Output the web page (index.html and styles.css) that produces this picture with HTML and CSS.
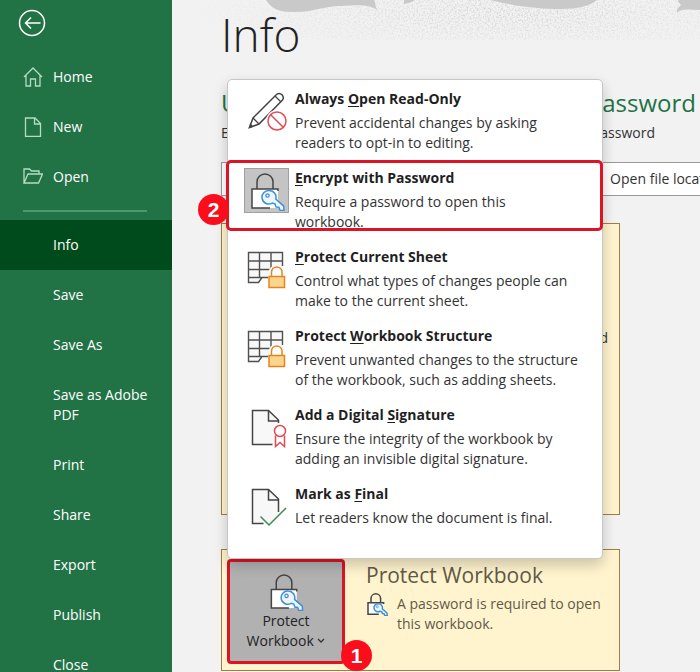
FILE: index.html
```
<!DOCTYPE html>
<html lang="en">
<head>
<meta charset="utf-8">
<title>Info</title>
<link rel="stylesheet" href="styles.css">
</head>

<body>

<!-- shared icons -->
<svg class="defs" width="0" height="0" aria-hidden="true">
	<symbol id="lock-key" viewBox="0 0 36 40">
		<path d="M3 18h26v19H3z" fill="#fff"/>
		<path d="M8 18V11a8 8 0 0 1 16 0v7M29 20v-2H3v19h18" fill="none" stroke="#444" stroke-width="1.500" vector-effect="non-scaling-stroke"/>
		<path d="M20.500 19.500a6.800 6.800 0 1 0 2.800 12.600l2.700.8 1 3 3 .5 1 2.900 4 .2-.3-4.400-7.900-7a6.800 6.800 0 0 0-6.300-8.600z" fill="#eef6fd" stroke="#3f8fd2" stroke-width="1.500" vector-effect="non-scaling-stroke"/>
		<circle cx="18.500" cy="24.500" r="1.700" fill="#fff" stroke="#3f8fd2" stroke-width="1.300"/>
	</symbol>
	<symbol id="sheet-lock" viewBox="0 0 40 38">
		<path d="M1.500 1.500h34v25h-21l-3 5h-10z" fill="#f8f8f8"/>
		<path d="M35.500 15V1.500h-34v30h10l3.500-5h7M1.500 10h34M1.500 18.500h24M1.500 26.500h14M12.500 1.500v25M24 1.500v20" fill="none" stroke="#505050" stroke-width="1.400"/>
		<path d="M22 25v-4c0-9 15-9 15 0v4h2v13H21V25z" fill="#fff"/>
		<path d="M24.500 25.500v-4c0-7.500 10.500-7.500 10.500 0v4" fill="none" stroke="#e8821e" stroke-width="1.500"/>
		<path d="M22 25.500h15.500V36.500H22z" fill="#fad58c" stroke="#e8821e" stroke-width="1.500"/>
	</symbol>
</svg>

<div class="backstage">

<nav class="sidebar">
	<button type="button" class="back" aria-label="Back">
		<svg width="28" height="28" viewBox="0 0 28 28"><circle cx="14" cy="14" r="12.500"/><path d="M22.500 14H7.500M13 8.500L7.500 14l5.500 5.500"/></svg>
	</button>
	<ul class="top">
		<li><a href="#"><svg width="20" height="20" viewBox="0 0 20 20"><path d="M1 10l9-9 9 9M3 8.500V19h4.500v-7h5v7H17V8.500"/></svg>Home</a></li>
		<li><a href="#"><svg width="20" height="20" viewBox="0 0 20 20"><path d="M2.500 1h9.500l5.500 5.500V19.500h-15zM11.500 1v6h6"/></svg>New</a></li>
		<li><a href="#"><svg width="20" height="20" viewBox="0 0 20 20"><path d="M1 16V2h5.500l2 2H16v3M1 16L5 7h14.500L15.500 16z"/></svg>Open</a></li>
	</ul>
	<ul>
		<li class="active"><a href="#">Info</a></li>
		<li><a href="#">Save</a></li>
		<li><a href="#">Save As</a></li>
		<li><a href="#">Save as Adobe PDF</a></li>
		<li><a href="#">Print</a></li>
		<li><a href="#">Share</a></li>
		<li><a href="#">Export</a></li>
		<li><a href="#">Publish</a></li>
		<li><a href="#">Close</a></li>
	</ul>
</nav>

<main>
	<svg class="banner" width="528" height="40" viewBox="0 0 528 40" aria-hidden="true">
		<defs>
			<filter id="grain" x="0" y="0" width="100%" height="100%">
				<feTurbulence type="fractalNoise" baseFrequency="0.6" numOctaves="2" seed="4"/>
				<feColorMatrix values="0 0 0 0 .66  0 0 0 0 .66  0 0 0 0 .66  3 0 0 0 -1.300"/>
			</filter>
			<radialGradient id="fade"><stop offset="0" stop-color="#fff"/><stop offset=".4" stop-color="#999"/><stop offset="1" stop-color="#000"/></radialGradient>
			<mask id="spread"><ellipse cx="335" cy="12" rx="320" ry="50" fill="url(#fade)"/></mask>
		</defs>
		<g mask="url(#spread)"><rect width="528" height="40" filter="url(#grain)"/></g>
		<path fill="#c9c9c9" d="M94 0c5 8 12 12 25 12 20 1 32-6 50-6 18-1 26-2 37 4-4-4-2-7-4-10zM232 0v4c5-1 8-2 11-4zM318 0c24 6 50 9 72 9 15 0 28-3 35-9zM506 0c0 3 2 3 3 5-2 2-5 4-4 8 4-5 14-3 23-3V0z"/>
	</svg>

	<h1>Info</h1>

	<div class="file-name"><span>U</span><span>Password</span></div>
	<div class="file-path"><span>E</span><span>Password</span></div>

	<div class="actions">
		<button type="button">Upload</button>
		<button type="button">Share</button>
		<button type="button">Copy path</button>
		<button type="button">Open file location</button>
	</div>

	<section class="card protected-view">
		<p>d</p>
	</section>

	<section class="card">
		<div class="dropdown">
			<button type="button" class="protect" aria-expanded="true">
				<svg width="36" height="40"><use href="#lock-key"/></svg>
				<span>Protect Workbook <svg class="chevron" width="8" height="6" viewBox="0 0 8 6"><path d="M1 1l3 3 3-3"/></svg></span>
			</button>
			<span class="badge">1</span>

			<ul class="menu">
				<li><a href="#">
					<span class="icon"><svg width="40" height="40" viewBox="0 0 40 40">
						<path d="M2.500 35.500L6 26 29.500 2.500c4-3 8.500 2 6 5.500L12 32z" fill="#fff" stroke="#444" stroke-width="1.500"/>
						<path d="M6 26l6 6M28 4l6 6M2.500 35.500l1-3 2 2z" fill="none" stroke="#444" stroke-width="1.300"/>
						<circle cx="30" cy="29" r="11" fill="#fff"/>
						<path d="M23.500 22.500l13 13" stroke="#e24a58" stroke-width="1.500"/>
						<circle cx="30" cy="29" r="9" fill="none" stroke="#e24a58" stroke-width="1.500"/>
					</svg></span>
					<span class="text"><b>Always <u>O</u>pen Read-Only</b>Prevent accidental changes by asking readers to opt-in to editing.</span>
				</a></li>
				<li class="selected"><a href="#">
					<span class="icon"><svg width="36" height="40"><use href="#lock-key"/></svg></span>
					<span class="text"><b><u>E</u>ncrypt with Password</b>Require a password to open this workbook.</span>
				</a><span class="badge">2</span></li>
				<li><a href="#">
					<span class="icon"><svg width="40" height="38"><use href="#sheet-lock"/></svg></span>
					<span class="text"><b><u>P</u>rotect Current Sheet</b>Control what types of changes people can make to the current sheet.</span>
				</a></li>
				<li><a href="#">
					<span class="icon"><svg width="40" height="38"><use href="#sheet-lock"/></svg></span>
					<span class="text"><b>Protect <u>W</u>orkbook Structure</b>Prevent unwanted changes to the structure of the workbook, such as adding sheets.</span>
				</a></li>
				<li><a href="#">
					<span class="icon"><svg width="40" height="40" viewBox="0 0 40 40">
						<path d="M5.500 2.500h16L31.500 13v23.500h-26z" fill="#f8f8f8"/>
						<path d="M31.500 15v-3L21.500 2.500h-16v34h20M21.500 2.500V13h10" fill="none" stroke="#444" stroke-width="1.500"/>
						<path d="M28.500 27.500v11l4.500-4 4.500 4v-11" fill="#fff" stroke="#e24a58" stroke-width="1.500"/>
						<circle cx="33" cy="23" r="5.500" fill="#fff" stroke="#e24a58" stroke-width="1.500"/>
					</svg></span>
					<span class="text"><b>Add a Digital <u>S</u>ignature</b>Ensure the integrity of the workbook by adding an invisible digital signature.</span>
				</a></li>
				<li><a href="#">
					<span class="icon"><svg width="40" height="40" viewBox="0 0 40 40">
						<path d="M5.500 2.500h16L31.500 13v23.500h-26z" fill="#f8f8f8"/>
						<path d="M31.500 25V12L21.500 2.500h-16v34h11M21.500 2.500V13h10" fill="none" stroke="#444" stroke-width="1.500"/>
						<path d="M13.500 29.500l8.500 8.500 17-17" fill="none" stroke="#3f8a5c" stroke-width="1.500"/>
					</svg></span>
					<span class="text"><b>Mark as <u>F</u>inal</b>Let readers know the document is final.</span>
				</a></li>
			</ul>
		</div>

		<div class="status">
			<h2>Protect Workbook</h2>
			<p><svg width="22" height="24"><use href="#lock-key"/></svg>A password is required to open this workbook.</p>
		</div>
	</section>
</main>

</div>

</body>
</html>
```

FILE: styles.css
```
*, *::after {
	box-sizing: border-box;
}

body {
	margin: 0;
	background: #f2f2f2;
	color: #333;
	font: 14px/20px "Open Sans", "Noto Sans", sans-serif;
}

ul, h1, h2, p {
	margin: 0;
	padding: 0;
}

li {
	list-style-type: none;
}

a {
	color: inherit;
	text-decoration: none;
}

button {
	font: inherit;
	color: inherit;
	padding: 0;
}

.defs {
	position: absolute;
}

.backstage {
	display: flex;
	height: 100vh;
	overflow: hidden;
}

/* sidebar */

.sidebar {
	flex: none;
	width: 172px;
	background: #217346;
	color: #fff;
}

.sidebar svg {
	display: block;
	fill: none;
	stroke: #fff;
	stroke-width: 1.5;
}

.back {
	display: block;
	margin: 9px 0 15px 18px;
	border: 0;
	background: none;
}

.sidebar a {
	display: flex;
	padding: 15px 16px 15px 53px;
}

.sidebar .top {
	margin-bottom: 8px;
}

.sidebar .top a {
	gap: 10px;
	padding-left: 23px;
}

.sidebar .top svg {
	stroke: #b5dcc4;
	stroke-width: 1.3;
}

.sidebar .top::after {
	content: "";
	display: block;
	height: 2px;
	margin: 8px 25px 0 23px;
	background: #4d9a6d;
}

.sidebar .active {
	background: #004b1c;
}

/* page */

main {
	position: relative;
	flex: 1;
	min-width: 0;
	padding-left: 49px;
	overflow: hidden;
}

.banner {
	position: absolute;
	top: 0;
	left: 0;
}

h1 {
	position: relative;
	height: 86px;
	color: #222;
	font-size: 46px;
	font-weight: 300;
	line-height: 68px;
}

.file-name, .file-path {
	display: flex;
	justify-content: space-between;
}

.file-name {
	max-width: 475px;
	color: #217346;
	font-size: 24px;
	line-height: 34px;
}

.file-path {
	max-width: 434px;
	padding: 3px 0 19px;
}

.actions {
	display: flex;
	gap: 7px;
	white-space: nowrap;
}

.actions button {
	flex: none;
	height: 34px;
	padding: 0 30px;
	border: 1px solid #999;
	background: #fff;
}

.card {
	position: relative;
	display: flex;
	gap: 21px;
	width: 399px;
	margin-bottom: 34px;
	padding: 9px 6px 6px 5px;
	border: 1px solid #9c7f3c;
	background: #fff4ce;
}

.protected-view {
	justify-content: flex-end;
	height: 292px;
	margin-top: 27px;
	padding: 104px 11px 0;
}

.dropdown {
	position: relative;
	flex: none;
}

.protect {
	display: flex;
	flex-direction: column;
	align-items: center;
	width: 118px;
	height: 105px;
	padding: 10px 8px;
	border: 3px solid #dc1424;
	border-radius: 4px;
	background: #b1b1b1;
	color: #222;
	font-weight: 500;
}

.chevron {
	fill: none;
	stroke: #333;
	stroke-width: 1.3;
	vertical-align: 2px;
}

.status {
	padding-top: 1px;
	color: #5f5a48;
}

h2 {
	font-size: 21px;
	font-weight: 400;
	line-height: 30px;
}

.status p {
	display: flex;
	align-items: flex-start;
	gap: 9px;
	padding-top: 4px;
}

.status svg {
	flex: none;
	margin-top: -2px;
}

/* menu */

.menu {
	position: absolute;
	bottom: 100%;
	left: 0;
	z-index: 1;
	width: 376px;
	padding-bottom: 23px;
	border: 1px solid #c6c6c6;
	border-radius: 5px;
	background: #fff;
	box-shadow: 0 6px 14px rgba(0, 0, 0, .2);
}

.menu li {
	position: relative;
}

.menu a {
	display: flex;
	gap: 6px;
	padding: 9px 16px 6px;
}

.menu .selected a {
	padding-right: 48px;
}

.menu b {
	display: block;
	margin-bottom: 4px;
	color: #1f1f1f;
	font-weight: 700;
}

.menu u {
	text-underline-offset: 2px;
}

.icon {
	display: flex;
	flex: none;
	align-items: center;
	justify-content: center;
	width: 45px;
	height: 45px;
}

.selected .icon {
	border: 1px solid #a0a0a0;
	background: #c4c4c4;
}

.selected::after {
	content: "";
	position: absolute;
	top: 1px;
	right: -1px;
	left: -2px;
	height: 71px;
	border: 3px solid #dc1424;
	border-radius: 5px;
}

.badge {
	position: absolute;
	z-index: 2;
	width: 31px;
	height: 31px;
	border-radius: 50%;
	background: #fb0d1c;
	color: #fff;
	font: bold 21px/31px "Liberation Sans", sans-serif;
	text-align: center;
}

.dropdown .badge {
	top: 81px;
	right: -27px;
}

.menu .badge {
	top: 35px;
	right: auto;
	left: -30px;
}
```
